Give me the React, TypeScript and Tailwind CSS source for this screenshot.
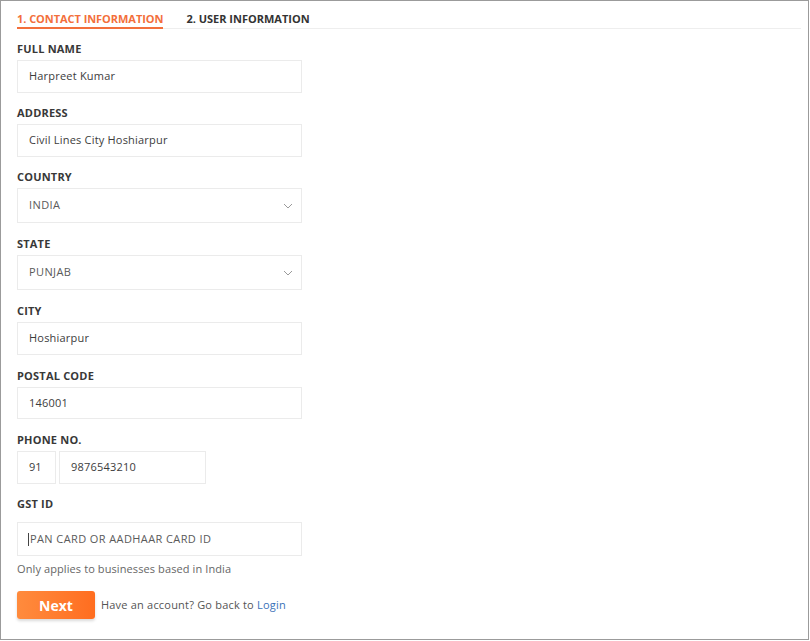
import React from "react";

const font = { fontFamily: '"Open Sans", "Liberation Sans", sans-serif' };

function Label({ children, className = "" }: { children: React.ReactNode; className?: string }) {
  return (
    <div className={"h-[14px] leading-[14px] text-[11px] font-bold text-[#383838] tracking-[0.2px] " + className}>
      {children}
    </div>
  );
}

function Chevron() {
  return (
    <svg width="10" height="6" viewBox="0 0 10 6" className="absolute right-[8px] top-1/2 -translate-y-1/2">
      <path d="M1 1 L5 5 L9 1" fill="none" stroke="#9a9a9a" strokeWidth="1" />
    </svg>
  );
}

function Input({ value, h = "h-[33px]", upper = false, select = false }: { value: string; h?: string; upper?: boolean; select?: boolean }) {
  return (
    <div
      className={
        "relative w-[285px] border border-[#ebebeb] flex items-center pl-[11px] text-[11px] " +
        h +
        (upper ? " uppercase tracking-[0.4px] text-[#5a5a5a]" : " text-[#3c3c3c] tracking-[0.2px]")
      }
    >
      {value}
      {select && <Chevron />}
    </div>
  );
}

export default function App() {
  return (
    <div className="w-[810px] h-[641px] bg-white" style={font}>
      <div className="w-[809px] h-[640px] border border-[#9b9b9b] pl-[16px] pr-[7px]">
        <div className="flex items-end gap-[23px] border-b border-[#eeeeee] pt-[11px]">
          <div className="text-[11px] font-bold leading-[13px] text-[#f36f3b] tracking-[-0.05px] pb-[2px] border-b-2 border-[#f36f3b] -mb-px">
            1. CONTACT INFORMATION
          </div>
          <div className="text-[11px] font-bold leading-[13px] text-[#333333] tracking-[0px] pb-[3px]">
            2. USER INFORMATION
          </div>
        </div>

        <Label className="mt-[13px] mb-[4px]">FULL NAME</Label>
        <Input value="Harpreet Kumar" />

        <Label className="mt-[13px] mb-[4px]">ADDRESS</Label>
        <Input value="Civil Lines City Hoshiarpur" />

        <Label className="mt-[13px] mb-[4px]">COUNTRY</Label>
        <Input value="INDIA" h="h-[35px]" upper select />

        <Label className="mt-[14px] mb-[4px]">STATE</Label>
        <Input value="PUNJAB" h="h-[35px]" upper select />

        <Label className="mt-[14px] mb-[4px]">CITY</Label>
        <Input value="Hoshiarpur" />

        <Label className="mt-[14px] mb-[4px]">POSTAL CODE</Label>
        <Input value="146001" h="h-[32px]" />

        <Label className="mt-[14px] mb-[4px]">PHONE NO.</Label>
        <div className="flex gap-[3px]">
          <div className="w-[39px] h-[33px] border border-[#ebebeb] flex items-center pl-[11px] text-[11px] text-[#3c3c3c]">91</div>
          <div className="w-[147px] h-[33px] border border-[#ebebeb] flex items-center pl-[11px] text-[11px] text-[#3c3c3c] tracking-[0.2px]">9876543210</div>
        </div>

        <Label className="mt-[13px] mb-[11px]">GST ID</Label>
        <div className="relative w-[285px] h-[34px] border border-[#ebebeb] flex items-center pl-[10px] text-[11px] text-[#5a5a5a] tracking-[0.4px]">
          <span className="inline-block w-px h-[13px] bg-[#444] mr-[1px]" />
          PAN CARD OR AADHAAR CARD ID
        </div>

        <div className="mt-[6px] h-[14px] leading-[14px] text-[11px] text-[#666666] tracking-[0.1px]">Only applies to businesses based in India</div>

        <div className="mt-[15px] flex items-center gap-[6px]">
          <button className="w-[78px] h-[28px] rounded-[3px] bg-gradient-to-r from-[#ff8b3d] to-[#ff6d1f] text-white font-bold text-[14px] shadow-[0_2px_3px_rgba(0,0,0,0.15)]">
            Next
          </button>
          <div className="text-[11px] text-[#555555] tracking-[0.2px]">
            Have an account? Go back to <span className="text-[#3a72b8]">Login</span>
          </div>
        </div>
      </div>
    </div>
  );
}
